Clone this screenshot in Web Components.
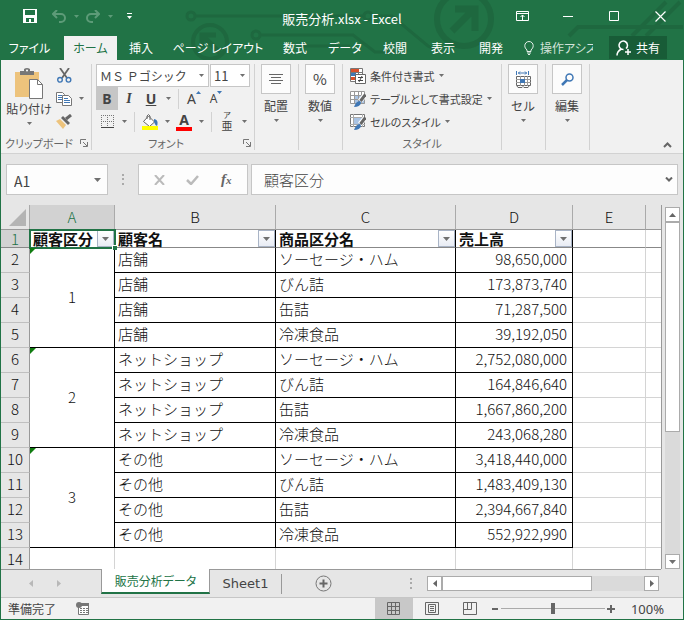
<!DOCTYPE html>
<html lang="ja">
<head>
<meta charset="utf-8">
<title>販売分析.xlsx - Excel</title>
<style>
	html, body {
		height: 100%;
		margin: 0;
	}
	body {
		font: 12px/16px "Noto Sans CJK JP", "Noto Sans", sans-serif;
		color: #444;
		--green: #217346;
		--line: #c6c6c6;
		--chrome: #e6e6e6;
		--ribbon: #f1f1f1;
	}
</style>
</head>
<body>
<excel-window></excel-window>

<script>
const base = `
	* { box-sizing: border-box; }
	button, input, select {
		font: inherit;
		color: inherit;
		background: none;
		border: 0;
		border-radius: 0;
		padding: 0;
		margin: 0;
		appearance: none;
	}
	button { display: flex; align-items: center; justify-content: center; }
	svg { display: block; }
`;

// registers an element that only needs a template
function define(name, css, html, setup) {
	const template = document.createElement('template');
	template.innerHTML = `<style>${base}${css}</style>${html}`;
	customElements.define(name, class extends HTMLElement {
		constructor() {
			super();
			this.attachShadow({ mode: 'open' });
			this.shadowRoot.appendChild(template.content.cloneNode(true));
		}
		connectedCallback() {
			if (setup) setup(this, this.shadowRoot);
		}
	});
}

const icons = {
	save: [14, 14, '<path fill="#fff" fill-rule="evenodd" d="M0 0h14v14H0zM2 1h10v5H2zM3 9h8v4H8v-3H6v3H3z"/>'],
	undo: [14, 13, '<path d="M5 0L1 4l4 4M1.500 4H9a4 4 0 0 1 0 8H7" fill="none" stroke="#5d9b78" stroke-width="2"/>'],
	redo: [14, 13, '<path d="M9 0l4 4-4 4M12.500 4H5a4 4 0 0 0 0 8h2" fill="none" stroke="#5d9b78" stroke-width="2"/>'],
	customize: [5, 6, '<path fill="#fff" d="M0 0h5v1H0zM0 3h5L2.500 6z"/>'],
	down: [5, 3, '<path fill="currentColor" d="M0 0h5L2.500 3z"/>'],
	down7: [7, 4, '<path fill="currentColor" d="M0 0h7L3.500 4z"/>'],
	up7: [7, 4, '<path fill="currentColor" d="M0 4h7L3.500 0z"/>'],
	left4: [4, 7, '<path fill="currentColor" d="M4 0v7L0 3.500z"/>'],
	right4: [4, 7, '<path fill="currentColor" d="M0 0v7l4-3.500z"/>'],
	display: [13, 10, '<path fill="none" stroke="#fff" d="M.5.5h12v9H.5zM1 2.500h11M6.500 9V4M4.500 6l2-2 2 2"/>'],
	minimize: [10, 10, '<path fill="#fff" d="M0 5h10v1H0z"/>'],
	maximize: [10, 10, '<path fill="none" stroke="#fff" d="M.5.5h9v9h-9z"/>'],
	close: [11, 11, '<path stroke="#fff" stroke-width="1.200" d="M.5.5l10 10M10.500.5l-10 10"/>'],
	bulb: [10, 14, '<path fill="none" stroke="#e6f0ea" d="M3 10.500V9C1.500 7.500.8 6.500.8 4.700a4.200 4.200 0 0 1 8.400 0C9.200 6.500 8.500 7.500 7 9v1.500zM3 12h4M4 13.500h2"/>'],
	share: [16, 16, '<path fill="none" stroke="#fff" stroke-width="1.500" d="M7.500 9.500a4.200 4.200 0 1 1 2.500-1M5.500 9C2.500 10.500 1 12 1 15.500M12 9v6M9 12h6"/>'],
	paste: [29, 31, '<path fill="#edc37c" d="M0 4h24v25H0z"/><path fill="#777" d="M5 7V3h4V1q3-2 6 0v2h4v4z"/><circle cx="12" cy="2.500" r="1" fill="#fff"/><path fill="#fff" stroke="#777" d="M14.500 11.500h8l5 5v14h-13z"/><path fill="none" stroke="#777" d="M22.500 11.500v5h5"/>'],
	cut: [15, 15, '<path stroke="#666" stroke-width="1.800" d="M3 0l7 10M12 0L5 10"/><g fill="none" stroke="#3f77b5" stroke-width="1.400"><circle cx="3" cy="11.800" r="2.300"/><circle cx="11.500" cy="11.800" r="2.300"/></g>'],
	copy: [16, 14, '<path fill="#fff" stroke="#777" d="M.5.5h6l2 2v8h-8z"/><path stroke="#3f77b5" d="M2 3.500h4M2 5.500h4M2 7.500h4"/><path fill="#fff" stroke="#777" d="M6.500 3.500h6l3 3v7h-9z"/><path stroke="#3f77b5" d="M8 6.500h4M8 8.500h6M8 10.500h6"/>'],
	brush: [16, 15, '<path fill="#edc37c" d="M0 7l4-2 6 6-3 4z"/><path fill="#666" d="M5 4l2-2 7 7-2 2z"/><path stroke="#666" stroke-width="3" d="M10 5l5-4"/>'],
	borders: [13, 13, '<path fill="none" stroke="#777" stroke-dasharray="1 1" d="M0 .5h13M.5 0v13M12.500 0v13M6.500 0v13M0 6.500h13"/><path stroke="#444" d="M0 12.500h13"/>'],
	fill: [16, 16, '<path fill="#fff" stroke="#666" d="M6.500 2l6 6-5 4.500-6-5z"/><path fill="none" stroke="#666" d="M5 5V2q1.500-3 3 0v4"/><path fill="#3f77b5" d="M12 5q5 1 3 7-2-1-3-4z"/><path fill="#ff0" d="M0 12h16v4H0z"/>'],
	align: [14, 11, '<path stroke="#666" d="M0 .5h14M2 3.500h10M0 6.500h14M2 9.500h10"/>'],
	conditional: [16, 16, '<path fill="#fff" stroke="#777" d="M.5.5h12v13H.5zM8.500 0v14M.5 4.500h12"/><path fill="#d9512c" d="M1 1h8v3H1zM1 9h4v3H1z"/><path fill="#3f77b5" d="M1 5h5v3H1z"/><path fill="#fff" stroke="#666" d="M5.500 6.500h10v9h-10z"/><path stroke="#444" d="M8 9.500h5M8 12.500h5M12 8l-3 6"/>'],
	table: [16, 16, '<path fill="#fff" d="M0 0h15v13H0z"/><path fill="#a9c3e3" d="M4 4h11v9H4z"/><path fill="none" stroke="#999" d="M.5.5h14v12H.5zM4.500 0v13M8.500 0v13M11.500 0v13M0 4.500h15M0 8.500h15"/><path stroke="#fff" stroke-width="5" d="M15 4l-5 6"/><path stroke="#666" stroke-width="3" d="M15.500 3.500l-5 6.500"/><path fill="#3f77b5" d="M4 16q2-6 6-6l1 2q-1 4-7 4z"/>'],
	cellstyle: [16, 16, '<path fill="#fff" stroke="#777" d="M.5.5h14v12H.5z"/><path fill="#a9c3e3" d="M4 4h8v6H4z"/><path fill="none" stroke="#aaa" d="M3.500 0v13M12.500 0v13M0 3.500h15M0 10.500h15"/><path stroke="#fff" stroke-width="5" d="M15 4l-5 6"/><path stroke="#666" stroke-width="3" d="M15.500 3.500l-5 6.500"/><path fill="#3f77b5" d="M4 16q2-6 6-6l1 2q-1 4-7 4z"/>'],
	cells: [15, 17, '<path fill="none" stroke="#3f77b5" d="M.5 0v4M12.500 0v4M2 2h9M4 .5L2.500 2 4 3.500M9 .5L10.500 2 9 3.500"/><path fill="#fff" stroke="#666" d="M.5 5.500h14v9H.5z"/><path stroke="#999" d="M4.500 5v10M8.500 5v10M11.500 5v10M0 8.500h15M0 11.500h15"/><path fill="#3f77b5" d="M4 8h5v4H4z"/><path fill="none" stroke="#666" d="M1 15l1 1.500h4l1-1 1 1h4l1-1.500"/>'],
	find: [13, 13, '<circle cx="8.500" cy="4.500" r="3.500" fill="none" stroke="#3f77b5" stroke-width="1.500"/><path stroke="#3f77b5" stroke-width="2.500" d="M6 7l-5 5"/>'],
	launcher: [8, 8, '<path fill="none" stroke="#777" d="M.5 5V.5H6M3 3l4 4M7.500 3v4.500H3"/>'],
	collapse: [9, 6, '<path fill="none" stroke="#666" stroke-width="2" d="M1 5l3.500-3.500L8 5"/>'],
	expand: [8, 5, '<path fill="none" stroke="#666" stroke-width="2" d="M1 .5L4 3.500 7 .5"/>'],
	cancel: [11, 10, '<path stroke="#bbb" stroke-width="2" d="M1 0l9 10M10 0L1 10"/>'],
	enter: [13, 10, '<path fill="none" stroke="#bbb" stroke-width="2.500" d="M1 5l4 4 7-8"/>'],
	dots: [2, 11, '<path fill="#aaa" d="M0 0h2v2H0zM0 4h2v2H0zM0 9h2v2H0z"/>'],
	all: [17, 17, '<path fill="#b4b4b4" d="M17 0v17H0z"/>'],
	add: [17, 17, '<circle cx="8.500" cy="8.500" r="7.500" fill="none" stroke="#777"/><path stroke="#666" stroke-width="2" d="M8.500 4.500v8M4.500 8.500h8"/>'],
	macro: [13, 13, '<path fill="#fff" stroke="#777" d="M2.500 2.500h10v10h-10z"/><path fill="#777" d="M5 1h8v3H5z"/><circle cx="3" cy="3" r="3" fill="#777"/><path stroke="#777" stroke-dasharray="2 1" d="M4 6.500h8M4 8.500h8M4 10.500h8"/>'],
	normal: [13, 13, '<path fill="none" stroke="#666" d="M.5.5h12v12H.5zM4.500 0v13M8.500 0v13M0 4.500h13M0 8.500h13"/>'],
	page: [14, 13, '<path fill="none" stroke="#666" d="M.5.5h13v12H.5zM3.500 2.500h7v8h-7zM5 4.500h4M5 6.500h4M5 8.500h4"/>'],
	break: [14, 13, '<path fill="none" stroke="#666" d="M.5.5h13v12H.5zM.5 7.500h8V.5M4.500 0v7"/>'],
	minus: [6, 2, '<path fill="#666" d="M0 0h6v2H0z"/>'],
	plus: [8, 8, '<path fill="#666" d="M3 0h2v3h3v2H5v3H3V5H0V3h3z"/>']
};

class UiIcon extends HTMLElement {
	connectedCallback() {
		const [w, h, body] = icons[this.getAttribute('name')];
		if (!this.shadowRoot) this.attachShadow({ mode: 'open' });
		this.shadowRoot.innerHTML = `
			<style>
				:host { display: block; flex: none; }
				:host([name^="down"]) { color: var(--arrow, #707070); }
				svg { display: block; }
			</style>
			<svg width="${w}" height="${h}" viewBox="0 0 ${w} ${h}" aria-hidden="true">${body}</svg>`;
	}
}
customElements.define('ui-icon', UiIcon);

define('title-bar', `
	:host { display: flex; justify-content: space-between; height: 36px; color: #fff; --arrow: #5d9b78; }
	.quick { align-items: center; height: 32px; }
	.quick button:nth-child(1) { width: 16px; margin: 0 12px 0 21px; }
	.quick button:nth-child(2), .quick button:nth-child(4) { width: 18px; }
	.quick button:nth-child(3), .quick button:nth-child(5) { width: 16px; }
	.quick button:nth-child(6) { width: 22px; }
	.side { flex: 1; display: flex; }
	.right { justify-content: flex-end; }
	h1 { margin: 0; font: inherit; font-size: 13px; line-height: 38px; }
	.win { width: 46px; height: 32px; }
`, `
	<div class="side quick">
		<button aria-label="上書き保存"><ui-icon name="save"></ui-icon></button>
		<button aria-label="元に戻す"><ui-icon name="undo"></ui-icon></button>
		<button aria-label="元に戻す一覧"><ui-icon name="down"></ui-icon></button>
		<button aria-label="やり直し"><ui-icon name="redo"></ui-icon></button>
		<button aria-label="やり直し一覧"><ui-icon name="down"></ui-icon></button>
		<button aria-label="カスタマイズ"><ui-icon name="customize"></ui-icon></button>
	</div>
	<h1>販売分析.xlsx - Excel</h1>
	<div class="side right">
		<button class="win" aria-label="リボンの表示オプション"><ui-icon name="display"></ui-icon></button>
		<button class="win" aria-label="最小化"><ui-icon name="minimize"></ui-icon></button>
		<button class="win" aria-label="最大化"><ui-icon name="maximize"></ui-icon></button>
		<button class="win" aria-label="閉じる"><ui-icon name="close"></ui-icon></button>
	</div>
`);

define('ribbon-tabs', `
	:host {
		display: grid;
		grid-template-columns: 63px 53px 48px 106px 48px 52px 48px 48px 48px 78px 1fr;
		height: 24px;
		color: #fff;
		font-feature-settings: "palt";
		white-space: nowrap;
	}
	.file { padding-right: 6px; }
	.on { background: var(--ribbon); color: var(--green); }
	.tell { justify-content: flex-start; gap: 6px; padding-left: 9px; overflow: hidden; color: #d3e3da; }
	.share { justify-self: end; width: 58px; height: 23px; margin-right: 16px; gap: 4px; background: #185c37; }
`, `
	<button class="file">ファイル</button>
	<button class="on">ホーム</button>
	<button>挿入</button>
	<button>ページ レイアウト</button>
	<button>数式</button>
	<button>データ</button>
	<button>校閲</button>
	<button>表示</button>
	<button>開発</button>
	<button class="tell"><ui-icon name="bulb"></ui-icon>操作アシス</button>
	<button class="share"><ui-icon name="share"></ui-icon>共有</button>
`);

// a column of the ribbon: controls in the slot, caption under them
define('ribbon-group', `
	:host { display: flex; flex-direction: column; flex: none; height: 86px; border-right: 1px solid #d2d2d2; }
	.body { flex: 1; min-height: 0; }
	footer { display: flex; align-items: center; height: 14px; color: #666; font-size: 11px; font-feature-settings: "palt"; }
	footer span { flex: 1; text-align: center; white-space: nowrap; }
	button { width: 14px; height: 14px; }
	:host(:not([launcher])) button { display: none; }
`, `
	<div class="body"><slot></slot></div>
	<footer><span></span><button aria-label="詳細"><ui-icon name="launcher"></ui-icon></button></footer>
`, (el, root) => {
	root.querySelector('footer span').textContent = el.getAttribute('caption') || '';
});

define('collapsed-group', `
	:host { display: block; }
	button { flex-direction: column; width: 42px; color: #444; }
	.box { display: grid; place-items: center; width: 30px; height: 30px; border: 1px solid var(--line); background: #fcfcfc; font-size: 15px; }
	.text { margin: 4px 0 5px; }
`, `
	<button>
		<span class="box"><slot></slot></span>
		<span class="text"></span>
		<ui-icon name="down"></ui-icon>
	</button>
`, (el, root) => {
	root.querySelector('.text').textContent = el.getAttribute('label');
});

define('clipboard-tools', `
	:host { display: flex; padding-left: 5px; }
	.paste { flex-direction: column; width: 46px; height: 64px; font-feature-settings: "palt"; white-space: nowrap; }
	.paste span { margin: 2px 0 5px; line-height: 16px; }
	.small { display: grid; grid-template-columns: 20px 14px; grid-auto-rows: 23px; margin-left: 2px; }
	.small button:not(.arrow) { grid-column: 1; }
`, `
	<button class="paste"><ui-icon name="paste"></ui-icon><span>貼り付け</span><ui-icon name="down"></ui-icon></button>
	<div class="small">
		<button aria-label="切り取り"><ui-icon name="cut"></ui-icon></button>
		<button aria-label="コピー"><ui-icon name="copy"></ui-icon></button>
		<button class="arrow" aria-label="コピーの種類"><ui-icon name="down"></ui-icon></button>
		<button aria-label="書式のコピー"><ui-icon name="brush"></ui-icon></button>
	</div>
`);

define('font-tools', `
	:host { display: block; padding-left: 4px; }
	.row { display: flex; align-items: center; height: 23px; }
	.pick { position: relative; display: flex; margin-right: 1px; color: #444; }
	.pick ui-icon { position: absolute; right: 5px; top: 10px; pointer-events: none; }
	select { height: 23px; padding-left: 3px; border: 1px solid var(--line); background: #fff; }
	.name { width: 113px; }
	.size { width: 40px; font-size: 13px; }
	.row button { width: 22px; height: 23px; font: 14px "Noto Sans", sans-serif; }
	.row .arrow { width: 12px; }
	.row .b { background: #c6c6c6; font-weight: bold; }
	.row .i { font: italic bold 14px "Liberation Serif", serif; }
	.row .u { font-weight: bold; text-decoration: underline; }
	.row .small { font-size: 12px; }
	sup { align-self: flex-start; margin-top: 4px; line-height: 0; }
	i { width: 1px; height: 20px; margin: 0 4px; background: #d2d2d2; }
	.color b { width: 16px; line-height: 14px; border-bottom: 4px solid #f00; }
	.row .ruby { flex-direction: column; font: 8px/8px "Noto Sans CJK JP", sans-serif; }
	.ruby span { height: 8px; }
	.ruby span + span { height: 13px; font-size: 11px; line-height: 13px; }
`, `
	<div class="row">
		<span class="pick"><select class="name" aria-label="フォント"><option>ＭＳ Ｐゴシック</option></select><ui-icon name="down"></ui-icon></span>
		<span class="pick"><select class="size" aria-label="フォント サイズ"><option>11</option></select><ui-icon name="down"></ui-icon></span>
	</div>
	<div class="row">
		<button class="b">B</button><button class="i">I</button><button class="u">U</button>
		<button class="arrow" aria-label="下線の種類"><ui-icon name="down"></ui-icon></button>
		<i></i>
		<button>A<sup><svg width="5" height="3"><path fill="#3f77b5" d="M0 3h5L2.500 0z"/></svg></sup></button>
		<button class="small">A<sup><svg width="5" height="3"><path fill="#3f77b5" d="M0 0h5L2.500 3z"/></svg></sup></button>
	</div>
	<div class="row">
		<button aria-label="罫線"><ui-icon name="borders"></ui-icon></button>
		<button class="arrow" aria-label="罫線の種類"><ui-icon name="down"></ui-icon></button>
		<i></i>
		<button aria-label="塗りつぶしの色"><ui-icon name="fill"></ui-icon></button>
		<button class="arrow" aria-label="塗りつぶしの色一覧"><ui-icon name="down"></ui-icon></button>
		<button class="color"><b>A</b></button>
		<button class="arrow" aria-label="フォントの色一覧"><ui-icon name="down"></ui-icon></button>
		<i></i>
		<button class="ruby"><span>ア</span><span>亜</span></button>
		<button class="arrow" aria-label="ふりがなの設定"><ui-icon name="down"></ui-icon></button>
	</div>
`);

define('style-tools', `
	:host { display: grid; grid-auto-rows: 23px; padding-left: 7px; font-size: 11px; font-feature-settings: "palt"; }
	button { justify-content: flex-start; gap: 4px; white-space: nowrap; }
`, `
	<button><ui-icon name="conditional"></ui-icon>条件付き書式<ui-icon name="down"></ui-icon></button>
	<button><ui-icon name="table"></ui-icon>テーブルとして書式設定<ui-icon name="down"></ui-icon></button>
	<button><ui-icon name="cellstyle"></ui-icon>セルのスタイル<ui-icon name="down"></ui-icon></button>
`);

define('excel-ribbon', `
	:host { display: flex; height: 94px; padding-top: 4px; background: var(--ribbon); border-bottom: 1px solid #d2d2d2; }
	.clip { width: 91px; }
	.font { width: 163px; }
	.one { width: 44px; }
	.style { width: 159px; }
	.fold { margin: auto 10px 0 auto; width: 12px; height: 16px; }
`, `
	<ribbon-group class="clip" caption="クリップボード" launcher><clipboard-tools></clipboard-tools></ribbon-group>
	<ribbon-group class="font" caption="フォント" launcher><font-tools></font-tools></ribbon-group>
	<ribbon-group class="one"><collapsed-group label="配置"><ui-icon name="align"></ui-icon></collapsed-group></ribbon-group>
	<ribbon-group class="one"><collapsed-group label="数値">%</collapsed-group></ribbon-group>
	<ribbon-group class="style" caption="スタイル"><style-tools></style-tools></ribbon-group>
	<ribbon-group class="one"><collapsed-group label="セル"><ui-icon name="cells"></ui-icon></collapsed-group></ribbon-group>
	<ribbon-group class="one"><collapsed-group label="編集"><ui-icon name="find"></ui-icon></collapsed-group></ribbon-group>
	<button class="fold" aria-label="リボンを折りたたむ"><ui-icon name="collapse"></ui-icon></button>
`);

define('formula-bar', `
	:host { display: flex; padding: 10px 5px; }
	.box { display: flex; align-items: center; height: 31px; border: 1px solid var(--line); background: #fdfdfd; }
	.ref { width: 102px; font-size: 14px; }
	input { flex: 1; min-width: 0; height: 29px; outline: 0; }
	.ref input { padding: 3px 0 0 7px; }
	.ref button { width: 20px; }
	.grip { align-self: center; margin: 0 14px; }
	.keys { width: 110px; margin-right: 3px; padding: 0 4px; }
	.keys button { flex: 1; height: 29px; font: italic bold 15px "Liberation Serif", serif; color: #666; }
	.keys small { font-size: 11px; }
	.text { flex: 1; font-size: 15px; font-weight: 300; }
	.text input { padding-left: 12px; }
	.text button { width: 16px; height: 29px; }
`, `
	<div class="box ref">
		<input aria-label="名前ボックス" value="A1">
		<button aria-label="名前一覧"><ui-icon name="down7"></ui-icon></button>
	</div>
	<ui-icon class="grip" name="dots"></ui-icon>
	<div class="box keys">
		<button aria-label="キャンセル"><ui-icon name="cancel"></ui-icon></button>
		<button aria-label="入力"><ui-icon name="enter"></ui-icon></button>
		<button>f<small>x</small></button>
	</div>
	<div class="box text">
		<input aria-label="数式バー" value="顧客区分">
		<button aria-label="数式バーの展開"><ui-icon name="expand"></ui-icon></button>
	</div>
`);

const titles = ['顧客区分', '顧客名', '商品区分名', '売上高'];
const products = ['ソーセージ・ハム', 'びん詰', '缶詰', '冷凍食品'];
const segments = [
	['店舗', ['98,650,000', '173,873,740', '71,287,500', '39,192,050']],
	['ネットショップ', ['2,752,080,000', '164,846,640', '1,667,860,200', '243,068,280']],
	['その他', ['3,418,440,000', '1,483,409,130', '2,394,667,840', '552,922,990']]
];

function gridRows() {
	const filter = '<button aria-label="フィルター"><ui-icon name="down7"></ui-icon></button>';
	let html = '<tr class="first"><th class="on">1</th>';
	titles.forEach((t, i) => {
		html += `<td class="${i ? 'k' : 'k cur'}"><div class="head"><span>${t}</span>${filter}</div></td>`;
	});
	html += '<td></td><td></td></tr>';
	let n = 2;
	segments.forEach(([customer, sales], s) => {
		sales.forEach((amount, i) => {
			html += `<tr><th>${n++}</th>`;
			if (i == 0) html += `<td class="k key" rowspan="4">${s + 1}</td>`;
			html += `<td class="k">${customer}</td><td class="k">${products[i]}</td><td class="k num">${amount}</td><td></td><td></td></tr>`;
		});
	});
	return html + '<tr><th>14</th>' + '<td></td>'.repeat(6) + '</tr>';
}

define('sheet-grid', `
	:host { display: block; flex: 1; min-width: 0; overflow: hidden; border-right: 1px solid #999; }
	table { width: 100%; table-layout: fixed; border-collapse: separate; border-spacing: 0; background: #fff; color: #111; font-size: 15px; font-weight: 300; line-height: 20px; }
	th, td { height: 25px; padding: 0 0 2px; white-space: nowrap; }
	th { font-weight: 300; background: var(--chrome); border-right: 1px solid #999; border-bottom: 1px solid #c0c0c0; }
	thead th { padding: 0; border-right-color: #aaa; border-bottom-color: #999; }
	thead th:last-child { border-right: 0; }
	thead ui-icon { float: right; margin-right: 3px; }
	th.on { color: var(--green); background: #d2d2d2; }
	td { padding-left: 3px; border-right: 1px solid #d4d4d4; border-bottom: 1px solid #d4d4d4; }
	td:last-child { border-right: 0; }
	.k { border-color: #000; }
	.num { text-align: right; padding-right: 5px; }
	.key { position: relative; padding-left: 0; text-align: center; }
	.key::before { content: ""; position: absolute; left: 0; top: 0; border: 3px solid; border-color: #107c10 transparent transparent #107c10; }
	.first > * { height: 18px; padding-bottom: 0; line-height: 17px; border-bottom-color: #888; }
	.first .k { font-weight: 700; }
	.first .cur { position: relative; }
	.cur::after { content: ""; position: absolute; inset: -1px -2px -2px -1px; border: 2px solid var(--green); pointer-events: none; }
	.cur::before { content: ""; position: absolute; z-index: 1; right: -3px; bottom: -3px; width: 5px; height: 5px; background: var(--green); border: solid #fff; border-width: 1px 0 0 1px; box-sizing: border-box; }
	.head { display: flex; justify-content: space-between; height: 17px; }
	.head button { flex: none; width: 17px; height: 17px; border: 1px solid #a9b4c6; background: linear-gradient(#fff, #e8ecf4); }
`, `
	<table>
		<colgroup>
			<col style="width:29px"><col style="width:85px"><col style="width:161px"><col style="width:180px"><col style="width:117px"><col style="width:73px"><col>
		</colgroup>
		<thead>
			<tr><th><ui-icon name="all"></ui-icon></th><th class="on">A</th><th>B</th><th>C</th><th>D</th><th>E</th><th></th></tr>
		</thead>
		<tbody>${gridRows()}</tbody>
	</table>
`);

// vertical by default, <scroll-bar row> lies down
define('scroll-bar', `
	:host { display: flex; flex-direction: column; width: 15px; background: #dadada; color: #666; }
	:host([row]) { flex-direction: row; width: auto; height: 15px; }
	button { flex: none; width: 15px; height: 15px; border: 1px solid #ababab; background: #fff; }
	.thumb { flex: 0 0 var(--thumb, 50%); border: 1px solid #ababab; background: #fff; }
	.rest { flex: 1; }
`, `
	<button class="prev" aria-label="前へ"><ui-icon name="up7"></ui-icon></button>
	<div class="thumb"></div>
	<div class="rest"></div>
	<button class="next" aria-label="次へ"><ui-icon name="down7"></ui-icon></button>
`, (el, root) => {
	if (!el.hasAttribute('row')) return;
	root.querySelector('.prev').innerHTML = '<ui-icon name="left4"></ui-icon>';
	root.querySelector('.next').innerHTML = '<ui-icon name="right4"></ui-icon>';
});

define('sheet-tabs', `
	:host { display: flex; flex: none; height: 28px; margin-right: 22px; }
	.cell { display: flex; align-items: center; border-top: 1px solid #999; }
	.nav { width: 100px; padding-left: 16px; color: #b8b8b8; }
	.nav button { width: 28px; height: 20px; }
	.on { width: 109px; height: 25px; background: #fff; border: solid #999; border-width: 0 1px; border-bottom: 2px solid var(--green); color: var(--green); font-feature-settings: "palt"; }
	.rest { flex: 1; min-width: 0; }
	.other { width: 72px; height: 20px; border-right: 1px solid #999; font: 13px "DejaVu Sans", sans-serif; }
	.add { width: 82px; height: 26px; }
	.space { flex: 1; }
	scroll-bar { width: 232px; margin: 0 2px 0 15px; --thumb: 150px; }
`, `
	<div class="cell nav">
		<button aria-label="前のシート"><ui-icon name="left4"></ui-icon></button>
		<button aria-label="次のシート"><ui-icon name="right4"></ui-icon></button>
	</div>
	<button class="on">販売分析データ</button>
	<div class="cell rest">
		<button class="other">Sheet1</button>
		<button class="add" aria-label="新しいシート"><ui-icon name="add"></ui-icon></button>
		<span class="space"></span>
		<ui-icon name="dots"></ui-icon>
		<scroll-bar row></scroll-bar>
	</div>
`);

define('status-bar', `
	:host { display: flex; align-items: center; flex: none; height: 22px; padding: 0 19px 0 7px; border-top: 1px solid var(--line); background: var(--ribbon); }
	.macro { margin-left: 20px; }
	.view { width: 38px; height: 21px; }
	.view:first-of-type { margin-left: auto; }
	.on { background: #c8c8c8; }
	.zoom { width: 12px; height: 20px; }
	input { width: 104px; height: 20px; }
	input::-webkit-slider-runnable-track { height: 11px; background: linear-gradient(#aaa, #aaa) center / 100% 1px no-repeat; }
	input::-webkit-slider-thumb { appearance: none; width: 4px; height: 11px; background: #666; }
	output { margin-left: 14px; font: 13px/16px "Noto Sans", sans-serif; }
`, `
	<span>準備完了</span>
	<ui-icon class="macro" name="macro"></ui-icon>
	<button class="view on" aria-label="標準"><ui-icon name="normal"></ui-icon></button>
	<button class="view" aria-label="ページ レイアウト表示"><ui-icon name="page"></ui-icon></button>
	<button class="view" aria-label="改ページ プレビュー"><ui-icon name="break"></ui-icon></button>
	<button class="zoom" aria-label="縮小"><ui-icon name="minus"></ui-icon></button>
	<input type="range" aria-label="ズーム" min="0" max="100" value="50">
	<button class="zoom" aria-label="拡大"><ui-icon name="plus"></ui-icon></button>
	<output>100%</output>
`);

define('excel-window', `
	:host { display: flex; flex-direction: column; height: 100%; min-height: 400px; box-sizing: border-box; border: solid var(--green); border-width: 0 1px 1px; background: var(--chrome); overflow: hidden; }
	header { position: relative; flex: none; background: var(--green); }
	header > :not(svg) { position: relative; }
	.art { position: absolute; right: 0; top: 0; }
	excel-ribbon, formula-bar { flex: none; }
	main { display: flex; flex: 1; min-height: 0; }
	scroll-bar { margin: 2px 3px 0; --thumb: 210px; }
`, `
	<header>
		<svg class="art" width="682" height="60" viewBox="1 0 682 60" fill="none" stroke="#1e683f" stroke-width="3" aria-hidden="true">
			<circle cx="191" cy="16" r="4"/><path d="M195 16h169"/>
			<circle cx="368" cy="16" r="4"/><path d="M372 16h20l36 30 12 6"/>
			<circle cx="256" cy="35" r="4"/><path d="M260 35h93l22 17h20"/>
			<path d="M300 46h50"/>
			<circle cx="210" cy="42" r="17" stroke-width="4"/><path stroke-width="5" d="M220 53l-16-16M202 48V35h14"/>
			<circle cx="464" cy="19" r="27" stroke-width="6"/><path stroke-width="7" d="M452 31l20-20M455 9h20v22"/>
			<path d="M569 36l9-9h105" stroke-width="4"/><path d="M632 36l34-34M646 36l34-34" stroke-width="4"/>
		</svg>
		<title-bar></title-bar>
		<ribbon-tabs></ribbon-tabs>
	</header>
	<excel-ribbon></excel-ribbon>
	<formula-bar></formula-bar>
	<main>
		<sheet-grid></sheet-grid>
		<scroll-bar></scroll-bar>
	</main>
	<sheet-tabs></sheet-tabs>
	<status-bar></status-bar>
`);
</script>
</body>
</html>
